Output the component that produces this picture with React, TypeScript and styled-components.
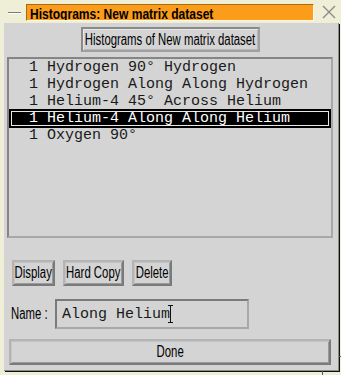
import styled, { createGlobalStyle } from "styled-components";

const GlobalStyle = createGlobalStyle`
  html, body {
    margin: 0;
    padding: 0;
    background: #efefd8;
  }
`;

const Frame = styled.div`
  position: relative;
  width: 341px;
  height: 375px;
  background: #efefd8;
  box-sizing: border-box;
  display: flex;
  flex-direction: column;
  font-family: "Liberation Sans", Arial, sans-serif;
`;

const TitleBar = styled.div`
  height: 23px;
  display: flex;
  align-items: flex-start;
`;

const MenuDash = styled.div`
  width: 13px;
  height: 1px;
  margin: 12px 0 0 8px;
  background: #7a7a7a;
  border-bottom: 1px solid #ffffff;
`;

const TitleField = styled.div`
  margin: 4px 0 0 5px;
  width: 288px;
  height: 17px;
  box-sizing: border-box;
  background: #fb9c1a;
  border-top: 1px solid #a86a10;
  border-left: 1px solid #a86a10;
  border-right: 1px solid #fff8e0;
  border-bottom: 1px solid #fff8e0;
  padding-left: 3px;
  overflow: hidden;
`;

const TitleText = styled.span`
  display: inline-block;
  transform: scaleX(0.86);
  transform-origin: left center;
  font-weight: bold;
  font-size: 14px;
  line-height: 15px;
  color: #000;
  white-space: nowrap;
`;

const CloseBox = styled.svg`
  margin: 5px 0 0 8px;
`;

const Panel = styled.div`
  margin-left: 4px;
  width: 335px;
  height: 348px;
  box-sizing: border-box;
  background: #d4d4d4;
  border-right: 1px solid #8a8a8a;
  border-bottom: 1px solid #8a8a8a;
  box-shadow: 1px 1px 0 #111;
  display: flex;
  flex-direction: column;
  padding: 4px 0 0 3px;
`;

const RaisedButton = styled.button<{ $w?: number }>`
  box-sizing: border-box;
  height: 26px;
  width: ${(p) => (p.$w ? `${p.$w}px` : "auto")};
  padding: 0;
  display: flex;
  align-items: center;
  justify-content: center;
  overflow: visible;
  background: #d4d4d4;
  border: 2px solid;
  border-color: #b4b4b4 #7a7a7a #7a7a7a #b4b4b4;
  box-shadow: inset 1px 1px 0 #c4c4c4, inset -1px -1px 0 #9a9a9a;
  font-family: "Liberation Sans", Arial, sans-serif;
  font-size: 16px;
  color: #000;
  cursor: default;
`;

const Narrow = styled.span`
  display: inline-block;
  flex-shrink: 0;
  white-space: nowrap;
  transform: scaleX(0.71);
  transform-origin: center center;
`;

const HeaderButton = styled(RaisedButton)`
  align-self: center;
  margin-right: 4px;
  height: 25px;
  border-color: #8a8a8a #a0a0a0 #a0a0a0 #8a8a8a;
  box-shadow: inset 1px 1px 0 #e6e6e6, inset -1px -1px 0 #b8b8b8;
`;

const ListBox = styled.div`
  margin-top: 5px;
  width: 326px;
  height: 181px;
  box-sizing: border-box;
  border: 2px solid;
  border-color: #858585 #a8a8a8 #a8a8a8 #858585;
  background: #d4d4d4;
  display: flex;
  flex-direction: column;
`;

const Row = styled.div<{ $selected?: boolean }>`
  box-sizing: border-box;
  padding-left: 20px;
  font-family: "Liberation Mono", "Courier New", monospace;
  font-size: 15px;
  white-space: pre;
  color: ${(p) => (p.$selected ? "#ffffff" : "#1a1a1a")};
  background: ${(p) => (p.$selected ? "#000" : "transparent")};
  box-shadow: ${(p) => (p.$selected ? "inset 0 0 0 2px #000, inset 0 0 0 3px #e8e8e8" : "none")};
  height: ${(p) => (p.$selected ? "19px" : "17px")};
  line-height: ${(p) => (p.$selected ? "19px" : "17px")};
  margin: ${(p) => (p.$selected ? "-1px 0" : "0")};
`;

const ButtonRow = styled.div`
  margin: 22px 0 0 5px;
  display: flex;
  gap: 8px;
`;

const NameRow = styled.div`
  margin: 13px 0 0 4px;
  display: flex;
  align-items: center;
`;

const Label = styled.span`
  width: 44px;
  flex-shrink: 0;
  font-size: 16px;
  color: #000;
`;

const LabelText = styled.span`
  display: inline-block;
  white-space: nowrap;
  transform: scaleX(0.71);
  transform-origin: left center;
`;

const Field = styled.div`
  width: 194px;
  height: 30px;
  box-sizing: border-box;
  border: 2px solid;
  border-color: #7a7a7a #a8a8a8 #a8a8a8 #7a7a7a;
  padding-left: 5px;
  display: flex;
  align-items: center;
  font-family: "Liberation Mono", "Courier New", monospace;
  font-size: 15px;
  white-space: pre;
  color: #1a1a1a;
`;

const Caret = styled.svg`
  margin-left: -2px;
`;

const DoneButton = styled(RaisedButton)`
  margin: 10px 0 0 2px;
  width: 322px;
  height: 26px;
`;

const GripV = styled.div`
  position: absolute;
  left: 322px;
  top: 371px;
  width: 1px;
  height: 4px;
  background: #555;
`;

const GripH = styled.div`
  position: absolute;
  left: 339px;
  top: 356px;
  width: 2px;
  height: 1px;
  background: #555;
`;

const rows = [
  "1 Hydrogen 90° Hydrogen",
  "1 Hydrogen Along Along Hydrogen",
  "1 Helium-4 45° Across Helium",
  "1 Helium-4 Along Along Helium",
  "1 Oxygen 90°",
];

export default function App() {
  return (
    <Frame>
      <GlobalStyle />
      <TitleBar>
        <MenuDash />
        <TitleField>
          <TitleText>Histograms: New matrix dataset</TitleText>
        </TitleField>
        <CloseBox width="14" height="14" viewBox="0 0 14 14">
          <path d="M1 1 L13 13 M13 1 L1 13" stroke="#8a8a8a" strokeWidth="1.4" />
        </CloseBox>
      </TitleBar>
      <Panel>
        <HeaderButton $w={179}>
          <Narrow>Histograms of New matrix dataset</Narrow>
        </HeaderButton>
        <ListBox>
          {rows.map((r, i) => (
            <Row key={i} $selected={i === 3}>
              {r}
            </Row>
          ))}
        </ListBox>
        <ButtonRow>
          <RaisedButton $w={43}>
            <Narrow>Display</Narrow>
          </RaisedButton>
          <RaisedButton $w={61}>
            <Narrow>Hard Copy</Narrow>
          </RaisedButton>
          <RaisedButton $w={40}>
            <Narrow>Delete</Narrow>
          </RaisedButton>
        </ButtonRow>
        <NameRow>
          <Label>
            <LabelText>Name :</LabelText>
          </Label>
          <Field>
            Along Helium
            <Caret width="5" height="18" viewBox="0 0 5 18">
              <path d="M0 0.5 H5 M2.5 0.5 V17.5 M0 17.5 H5" stroke="#111" strokeWidth="1" />
            </Caret>
          </Field>
        </NameRow>
        <DoneButton>
          <Narrow>Done</Narrow>
        </DoneButton>
      </Panel>
      <GripV />
      <GripH />
    </Frame>
  );
}
